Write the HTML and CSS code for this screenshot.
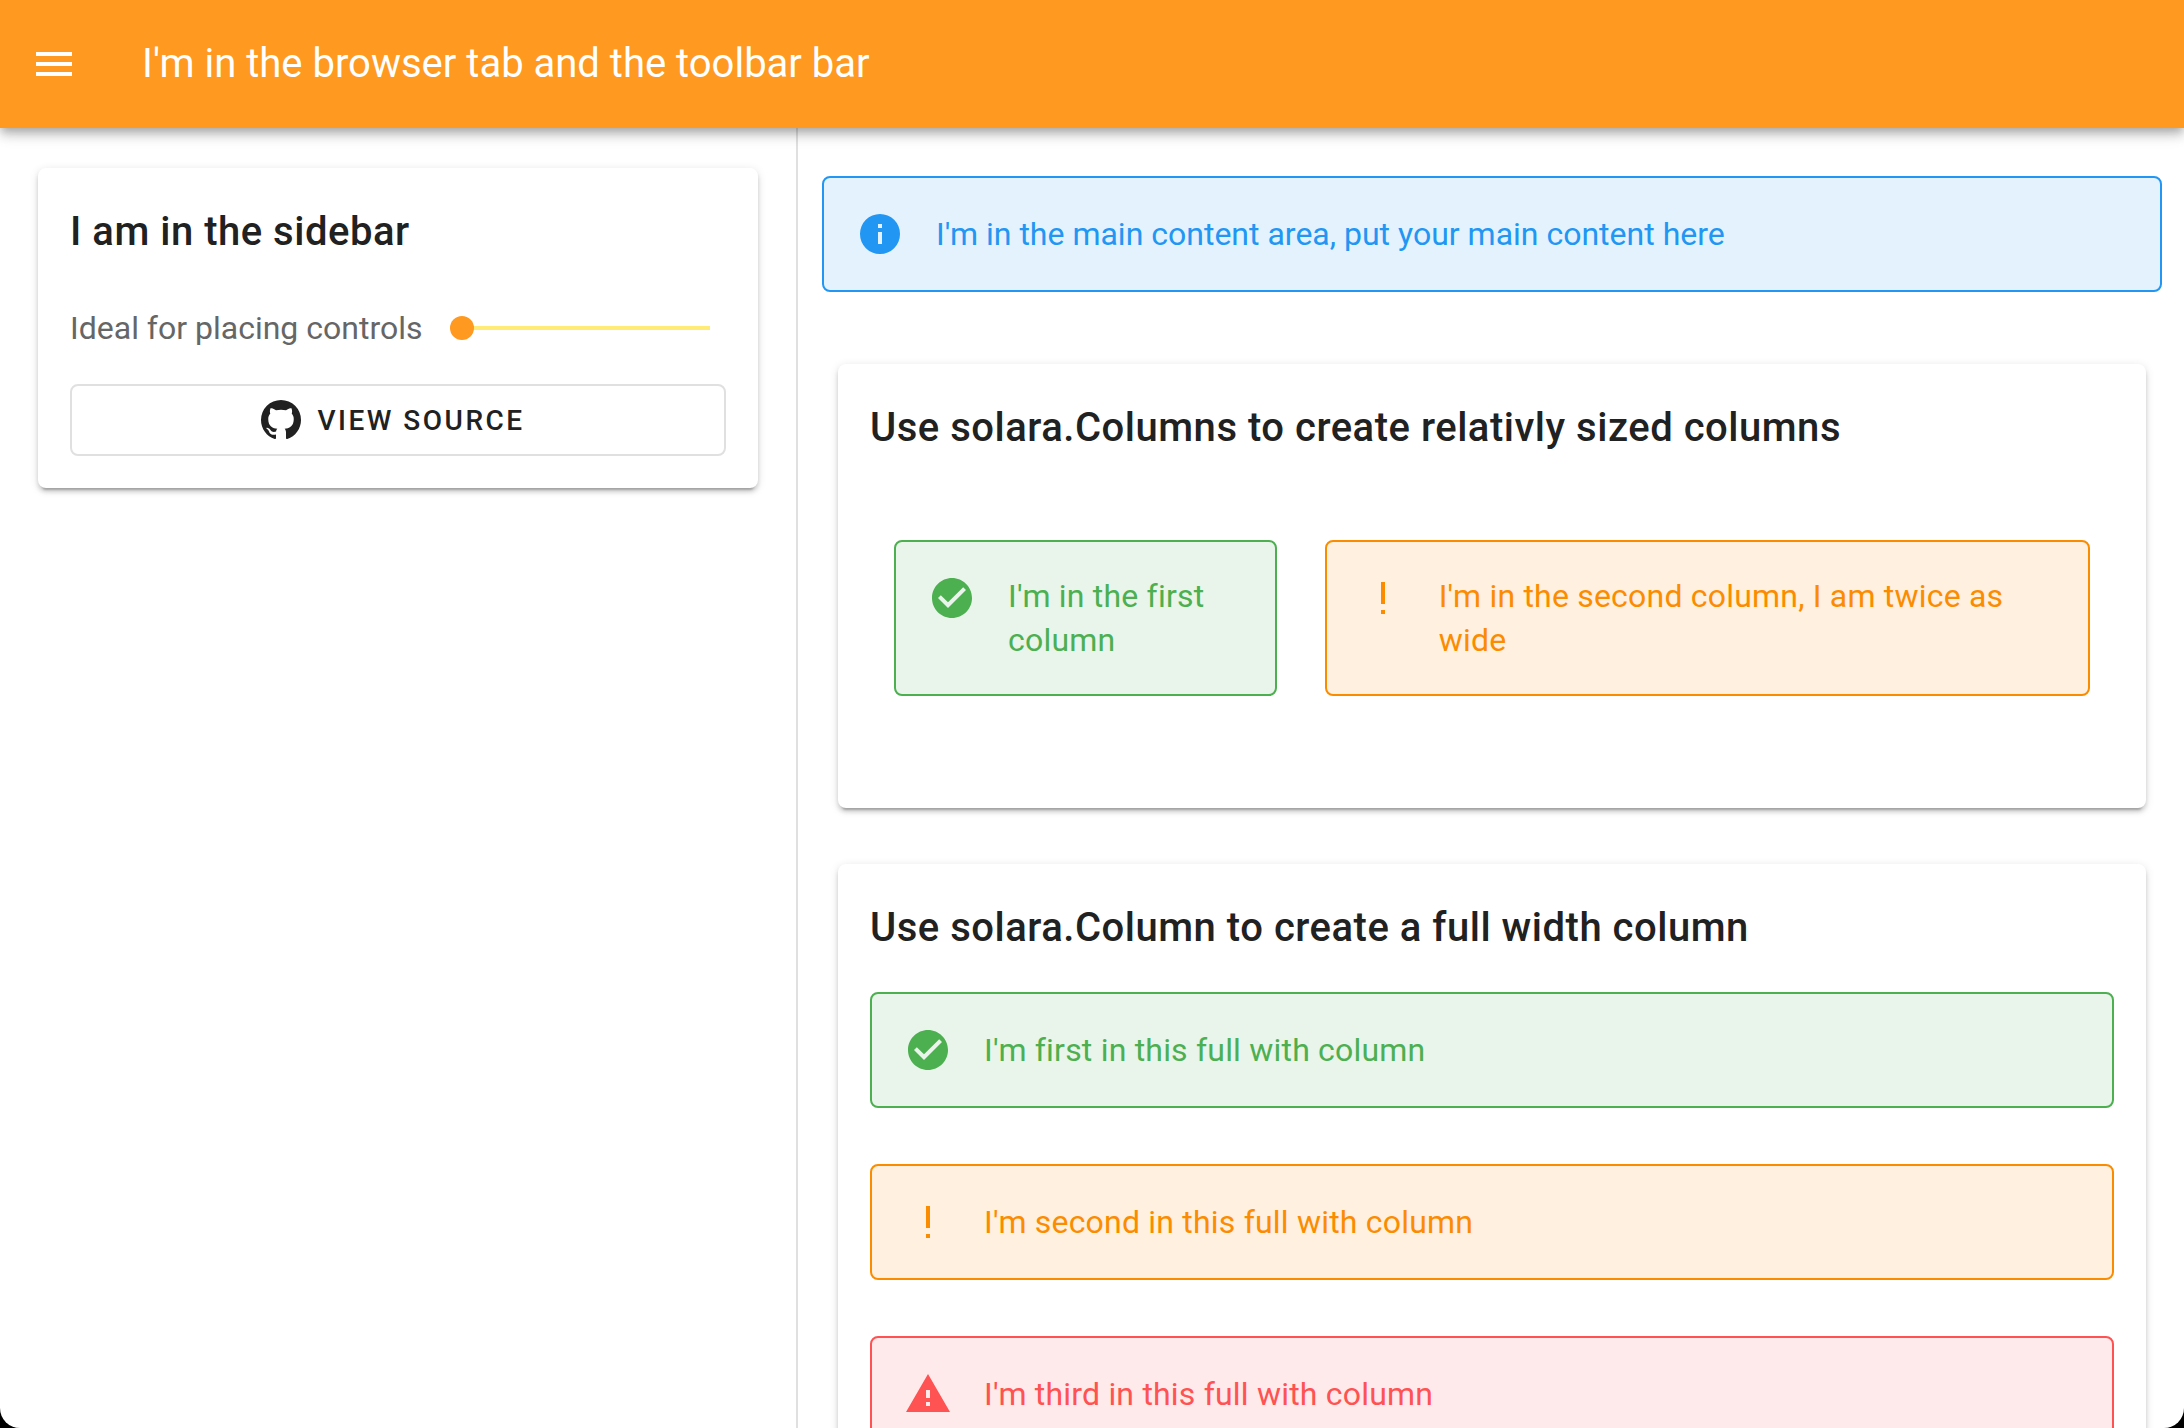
FILE: index.html
```html
<!DOCTYPE html>
<html lang="en">
<head>
<meta charset="utf-8">
<title>I'm in the browser tab and the toolbar bar</title>
<link rel="stylesheet" href="styles.css">
</head>
<body>
<svg width="0" height="0" class="sprite" aria-hidden="true">
  <symbol id="menu" viewBox="0 0 24 24"><path d="M3,6H21V8H3V6M3,11H21V13H3V11M3,16H21V18H3V16Z"/></symbol>
  <symbol id="info" viewBox="0 0 24 24"><path d="M13,9H11V7H13M13,17H11V11H13M12,2A10,10 0 0,0 2,12A10,10 0 0,0 12,22A10,10 0 0,0 22,12A10,10 0 0,0 12,2Z"/></symbol>
  <symbol id="check" viewBox="0 0 24 24"><path d="M12 2C6.5 2 2 6.5 2 12S6.5 22 12 22 22 17.5 22 12 17.5 2 12 2M10 17L5 12L6.41 10.59L10 14.17L17.59 6.58L19 8L10 17Z"/></symbol>
  <symbol id="exclamation" viewBox="0 0 24 24"><path d="M11,4H13V15H11V4M13,18V20H11V18H13Z"/></symbol>
  <symbol id="alert" viewBox="0 0 24 24"><path d="M13,14H11V10H13M13,18H11V16H13M1,21H23L12,2L1,21Z"/></symbol>
  <symbol id="github" viewBox="0 0 24 24"><path d="M12,2A10,10 0 0,0 2,12C2,16.42 4.87,20.17 8.84,21.5C9.34,21.58 9.5,21.27 9.5,21C9.5,20.77 9.5,20.14 9.5,19.31C6.73,19.91 6.14,17.97 6.14,17.97C5.68,16.81 5.03,16.5 5.03,16.5C4.12,15.88 5.1,15.9 5.1,15.9C6.1,15.97 6.63,16.93 6.63,16.93C7.5,18.45 8.97,18 9.54,17.76C9.63,17.11 9.89,16.67 10.17,16.42C7.95,16.17 5.62,15.31 5.62,11.5C5.62,10.39 6,9.5 6.65,8.79C6.55,8.54 6.2,7.5 6.75,6.15C6.75,6.15 7.59,5.88 9.5,7.17C10.29,6.95 11.15,6.84 12,6.84C12.85,6.84 13.71,6.95 14.5,7.17C16.41,5.88 17.25,6.15 17.25,6.15C17.8,7.5 17.45,8.54 17.35,8.79C18,9.5 18.38,10.39 18.38,11.5C18.38,15.32 16.04,16.16 13.81,16.41C14.17,16.72 14.5,17.33 14.5,18.26C14.5,19.6 14.5,20.68 14.5,21C14.5,21.27 14.66,21.59 15.17,21.5C19.14,20.16 22,16.42 22,12A10,10 0 0,0 12,2Z"/></symbol>
</svg>
<div class="window">
  <header class="toolbar">
    <svg class="icon"><use href="#menu"/></svg>
    <div class="toolbar-title">I'm in the browser tab and the toolbar bar</div>
  </header>
  <div class="layout">
    <aside class="sidebar">
      <section class="card">
        <h2 class="card-title">I am in the sidebar</h2>
        <div class="slider">
          <label class="slider-label">Ideal for placing controls</label>
          <div class="slider-track"><span class="slider-thumb"></span></div>
        </div>
        <button class="button"><svg class="icon"><use href="#github"/></svg><span>View source</span></button>
      </section>
    </aside>
    <main class="content">
      <div class="note info"><svg class="icon"><use href="#info"/></svg><p>I'm in the main content area, put your main content here</p></div>
      <section class="card columns-card">
        <h2 class="card-title">Use solara.Columns to create relativly sized columns</h2>
        <div class="columns">
          <div class="note success"><svg class="icon"><use href="#check"/></svg><p>I'm in the first column</p></div>
          <div class="note warning"><svg class="icon"><use href="#exclamation"/></svg><p>I'm in the second column, I am twice as wide</p></div>
        </div>
      </section>
      <section class="card">
        <h2 class="card-title">Use solara.Column to create a full width column</h2>
        <div class="stack">
          <div class="note success"><svg class="icon"><use href="#check"/></svg><p>I'm first in this full with column</p></div>
          <div class="note warning"><svg class="icon"><use href="#exclamation"/></svg><p>I'm second in this full with column</p></div>
          <div class="note error"><svg class="icon"><use href="#alert"/></svg><p>I'm third in this full with column</p></div>
        </div>
      </section>
    </main>
  </div>
</div>
</body>
</html>
```
FILE: styles.css
```css
* { box-sizing: border-box; }

html { background: #000; }

body {
  margin: 0;
  height: 100vh;
  overflow: hidden;
  background: #000;
  color: #212121;
  font-family: Roboto, "Liberation Sans", sans-serif;
  font-size: 32px;
}

h2, p { margin: 0; }

.sprite { display: none; }

.icon {
  flex: none;
  width: 48px;
  height: 48px;
  fill: currentColor;
}

.window {
  display: flex;
  flex-direction: column;
  height: 100vh;
  overflow: hidden;
  background: #fff;
  border-radius: 0 0 20px 20px;
}

.toolbar {
  position: relative;
  z-index: 1;
  flex: none;
  display: flex;
  align-items: center;
  gap: 64px;
  height: 128px;
  padding: 0 30px;
  background: #ff991f;
  color: #fff;
  box-shadow: 0 4px 8px -2px rgba(0, 0, 0, .2), 0 8px 10px 0 rgba(0, 0, 0, .14), 0 2px 20px 0 rgba(0, 0, 0, .12);
}

.toolbar-title {
  font-size: 40px;
  line-height: 60px;
}

.layout {
  flex: 1;
  display: flex;
  min-height: 0;
}

.sidebar {
  flex: none;
  width: 798px;
  padding: 40px 38px;
  border-right: 2px solid #e0e0e0;
}

.content {
  flex: 1;
  padding: 48px 22px 0 24px;
}

.card {
  padding: 32px;
  border-radius: 8px;
  background: #fff;
  box-shadow: 0 6px 2px -4px rgba(0, 0, 0, .2), 0 4px 4px 0 rgba(0, 0, 0, .14), 0 2px 10px 0 rgba(0, 0, 0, .12);
}

.content .card { margin: 0 16px 56px; }

.card-title {
  font-size: 40px;
  font-weight: 500;
  line-height: 64px;
  letter-spacing: .515px;
}

.slider {
  display: flex;
  align-items: center;
  gap: 40px;
  height: 64px;
  margin: 32px 16px 24px 0;
}

.slider-label { color: #666; white-space: nowrap; }

.slider-track {
  flex: 1;
  display: flex;
  align-items: center;
  height: 4px;
  background: #ffeb76;
}

.slider-thumb {
  width: 24px;
  height: 24px;
  margin-left: -12px;
  border-radius: 50%;
  background: #ff991f;
}

.button {
  display: flex;
  align-items: center;
  justify-content: center;
  gap: 12px;
  width: 100%;
  height: 72px;
  padding: 0 14px 0 0;
  border: 2px solid #e0e0e0;
  border-radius: 8px;
  background: transparent;
  color: inherit;
  font: 500 28px Roboto, "Liberation Sans", sans-serif;
  letter-spacing: 2.5px;
  text-transform: uppercase;
}

.note {
  display: flex;
  align-items: flex-start;
  gap: 32px;
  padding: 32px;
  border: 2px solid currentColor;
  border-radius: 8px;
  line-height: 44px;
}

.note p { align-self: center; }

.card .note { letter-spacing: .2px; }

.info { margin-bottom: 72px; color: #2196f3; background: #e4f2fd; }
.success { color: #4caf50; background: #e9f4ea; }
.warning { color: #fb8c00; background: #fff0e0; }
.error { color: #ff5252; background: #feeaea; }

.columns-card { min-height: 444px; }

.columns {
  display: grid;
  grid-template-columns: 1fr 2fr;
  gap: 48px;
  padding: 80px 24px;
}

.stack {
  display: flex;
  flex-direction: column;
  gap: 56px;
  padding-top: 32px;
}
```
